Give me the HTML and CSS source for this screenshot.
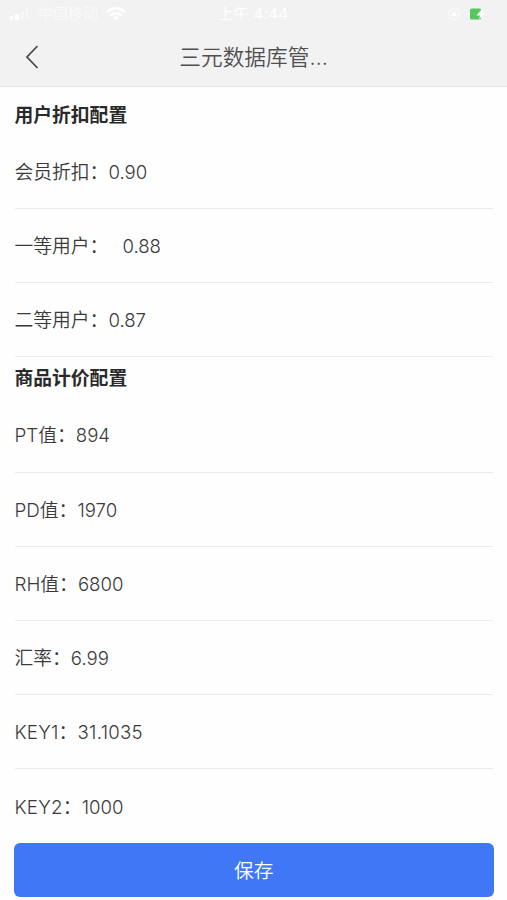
FILE: index.html
```html
<!DOCTYPE html>
<html lang="zh-CN">
<head>
    <meta charset="UTF-8">
    <meta name="viewport" content="width=device-width, initial-scale=1.0">
    <title>三元数据库管理</title>
    <link rel="stylesheet" href="styles.css">
</head>
<body>
    <header class="header">
        <div class="status-bar">
            <div class="status-left">
                <svg class="signal" width="22" height="14" viewBox="0 0 22 14" fill="#fff">
                    <rect x="0" y="9" width="3" height="4" rx="1"/>
                    <rect x="5" y="7" width="4" height="6" rx="1"/>
                    <rect x="11" y="4" width="3" height="9" rx="1" opacity="0.3"/>
                    <rect x="16" y="1" width="3" height="12" rx="1" opacity="0.3"/>
                </svg>
                <span class="carrier">中国移动</span>
                <svg class="wifi" width="20" height="14" viewBox="0 0 20 14" fill="none" stroke="#fff" stroke-width="2.4">
                    <path d="M1 5 Q10 -2.5 19 5"/>
                    <path d="M4.5 8.5 Q10 4 15.5 8.5"/>
                    <path d="M7 10.5 Q10 8.5 13 10.5 L10 13.5 Z" fill="#fff" stroke="none"/>
                </svg>
            </div>
            <div class="status-time">上午 4:44</div>
            <div class="status-right">
                <svg width="14" height="14" viewBox="0 0 14 14" fill="none" stroke="#fff" stroke-width="1.2">
                    <circle cx="7" cy="7" r="5.5" stroke-dasharray="2 1"/>
                    <path d="M7 4 L10 9 H4 Z" fill="#fff" stroke="none"/>
                </svg>
                <svg width="17" height="14" viewBox="0 0 17 14">
                    <rect x="0" y="1.5" width="11" height="11" rx="1.5" fill="#56c75b"/>
                    <path d="M12 2 L6.5 8.5 H10 L9 12.5 L15.5 5.5 H12 Z" fill="#fff"/>
                </svg>
            </div>
        </div>
        <div class="nav-bar">
            <a class="back" href="#">
                <svg width="14" height="24" viewBox="0 0 14 24" fill="none" stroke="#4a4a4a" stroke-width="1.8">
                    <path d="M12.5 1 L2 12 L12.5 23"/>
                </svg>
            </a>
            <h1 class="nav-title">三元数据库管…</h1>
        </div>
    </header>

    <main class="content">
        <h2 class="section-title">用户折扣配置</h2>
        <div class="row"><span class="label">会员折扣：</span><span class="value">0.90</span></div>
        <div class="row"><span class="label">一等用户：</span><span class="value indent">0.88</span></div>
        <div class="row"><span class="label">二等用户：</span><span class="value">0.87</span></div>

        <h2 class="section-title">商品计价配置</h2>
        <div class="row"><span class="label">PT值：</span><span class="value">894</span></div>
        <div class="row"><span class="label">PD值：</span><span class="value">1970</span></div>
        <div class="row"><span class="label">RH值：</span><span class="value">6800</span></div>
        <div class="row"><span class="label">汇率：</span><span class="value">6.99</span></div>
        <div class="row"><span class="label key">KEY1：</span><span class="value key">31.1035</span></div>
        <div class="row last"><span class="label key">KEY2：</span><span class="value">1000</span></div>
    </main>

    <button class="save-btn" type="button">保存</button>
</body>
</html>
```
FILE: styles.css
```css
* {
    box-sizing: border-box;
}
body {
    margin: 0;
    height: 900px;
    overflow: hidden;
    background-color: #fefefe;
    color: #3a3a3a;
    font-family: Inter, "Noto Sans CJK SC", sans-serif;
    font-size: 18.8px;
}
.header {
    height: 87px;
    background-color: #f2f2f2;
    border-bottom: 1px solid #e6e6e6;
}
.status-bar {
    display: grid;
    grid-template-columns: 1fr auto 1fr;
    align-items: center;
    height: 28px;
    padding: 0 20px 0 10px;
    color: #fff;
    font-size: 15px;
    line-height: 28px;
}
.status-left,
.status-right {
    display: flex;
    align-items: center;
}
.carrier {
    margin: 0 8px 0 6px;
    opacity: 0.6;
}
.status-time {
    padding-left: 10px;
    letter-spacing: 0.4px;
}
.status-right {
    justify-content: flex-end;
    gap: 9px;
}
.nav-bar {
    display: grid;
    grid-template-columns: 60px 1fr 60px;
    align-items: center;
    height: 58px;
}
.back {
    display: flex;
    padding-left: 25px;
}
.nav-title {
    margin: 0;
    text-align: center;
    font-size: 21.7px;
    font-weight: 350;
    line-height: 58px;
    color: #505050;
}
.content {
    padding: 7px 14px 0 14.5px;
}
.section-title {
    margin: 0;
    height: 41px;
    padding-top: 1px;
    line-height: 41px;
    font-size: 18.8px;
    font-weight: 700;
    color: #2a2a2a;
}
.row {
    display: flex;
    align-items: center;
    height: 74.15px;
    border-bottom: 1px solid #ececec;
    font-weight: 350;
}
.row.last {
    border-bottom: none;
}
.label {
    padding-bottom: 2px;
}
.label.key {
    letter-spacing: 0.2px;
}
.value {
    padding-top: 1px;
    font-size: 18.6px;
}
.value.key {
    letter-spacing: 0.3px;
}
.value.indent {
    margin-left: 14px;
}
.save-btn {
    display: block;
    width: 479.5px;
    height: 54px;
    margin: 0 14px;
    border: none;
    border-radius: 6px;
    background-color: #4077f6;
    color: #fff;
    font-family: inherit;
    font-size: 19.8px;
    font-weight: 350;
    padding: 0 6px 2px;
}
```
